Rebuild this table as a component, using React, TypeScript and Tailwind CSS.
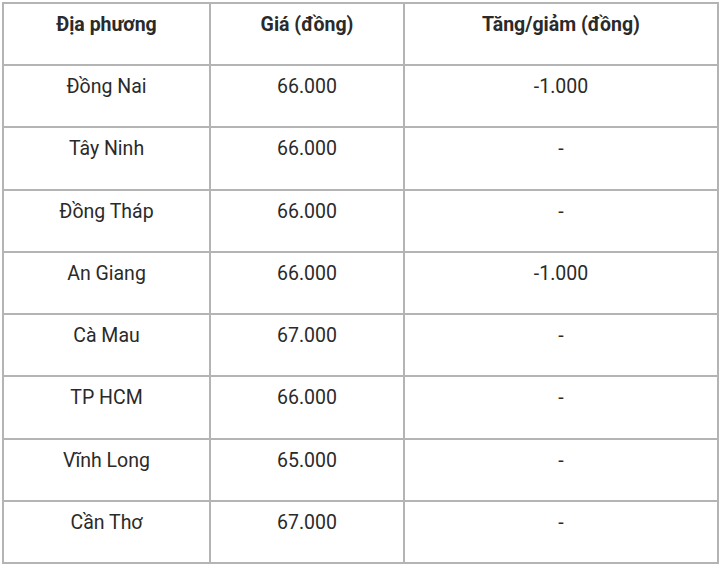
const rows = [
  { place: 'Đồng Nai', price: '66.000', change: '-1.000' },
  { place: 'Tây Ninh', price: '66.000', change: '-' },
  { place: 'Đồng Tháp', price: '66.000', change: '-' },
  { place: 'An Giang', price: '66.000', change: '-1.000' },
  { place: 'Cà Mau', price: '67.000', change: '-' },
  { place: 'TP HCM', price: '66.000', change: '-' },
  { place: 'Vĩnh Long', price: '65.000', change: '-' },
  { place: 'Cần Thơ', price: '67.000', change: '-' },
];

export default function App() {
  return (
    <div className="w-[720px] h-[565px] bg-white pt-[2px] pl-[2px] font-['Roboto',sans-serif] text-[#2a2a2a]">
      <table className="w-[715px] border-collapse table-fixed text-[19.5px] leading-[24px]">
        <colgroup>
          <col className="w-[207px]" />
          <col className="w-[194px]" />
          <col className="w-[314px]" />
        </colgroup>
        <thead>
          <tr className="h-[62px]">
            <th className="border-2 border-[#b4b4b4] align-top text-center pt-[9px] font-bold">Địa phương</th>
            <th className="border-2 border-[#b4b4b4] align-top text-center pt-[9px] font-bold">Giá (đồng)</th>
            <th className="border-2 border-[#b4b4b4] align-top text-center pt-[9px] font-bold">Tăng/giảm (đồng)</th>
          </tr>
        </thead>
        <tbody>
          {rows.map((r, i) => (
            <tr key={i} className="h-[62.3px]">
              <td className="border-2 border-[#b4b4b4] align-top text-center pt-[9px]">{r.place}</td>
              <td className="border-2 border-[#b4b4b4] align-top text-center pt-[9px]">{r.price}</td>
              <td className="border-2 border-[#b4b4b4] align-top text-center pt-[9px]">{r.change}</td>
            </tr>
          ))}
        </tbody>
      </table>
    </div>
  );
}
